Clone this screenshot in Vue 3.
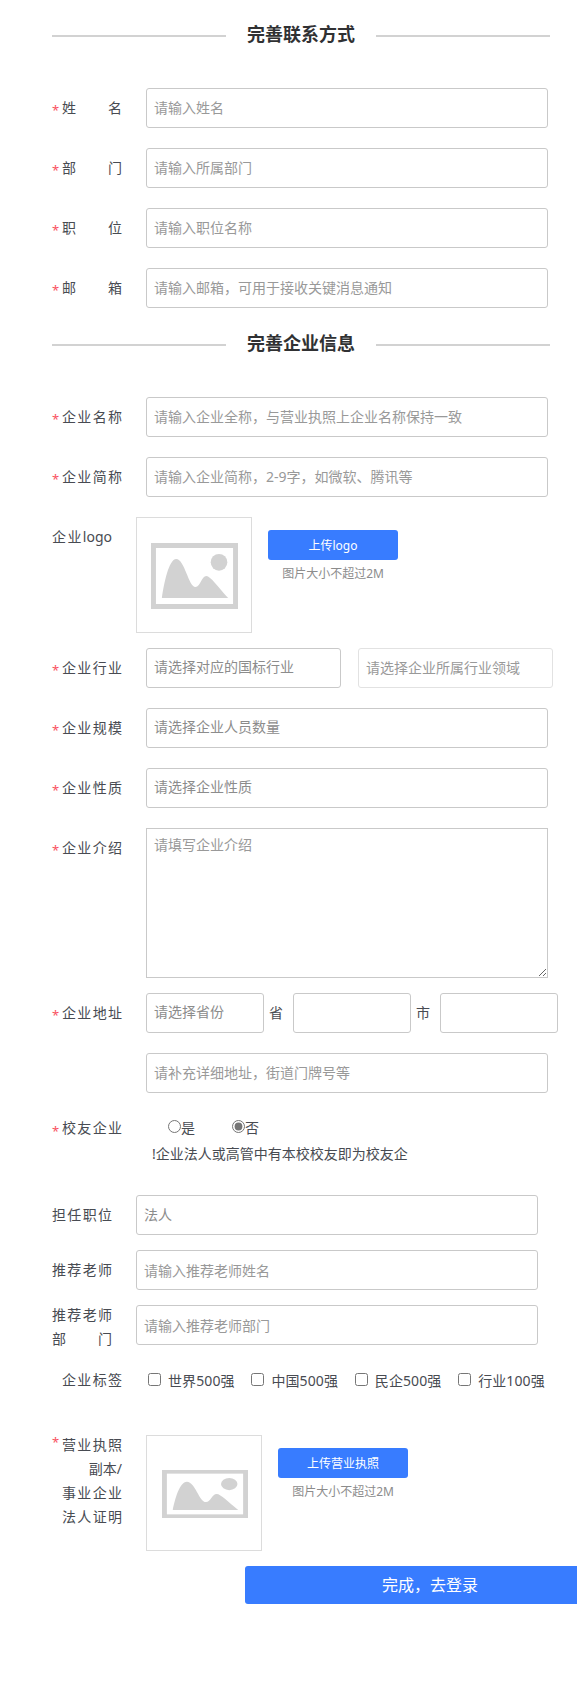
<script setup>
import { ref } from "vue";

const contact = ref([
  { label: "姓 名", placeholder: "请输入姓名", value: "" },
  { label: "部 门", placeholder: "请输入所属部门", value: "" },
  { label: "职 位", placeholder: "请输入职位名称", value: "" },
  { label: "邮 箱", placeholder: "请输入邮箱，可用于接收关键消息通知", value: "" },
]);
const company = ref([
  { label: "企业名称", placeholder: "请输入企业全称，与营业执照上企业名称保持一致", value: "" },
  { label: "企业简称", placeholder: "请输入企业简称，2-9字，如微软、腾讯等", value: "" },
]);
const selects = ref([
  { label: "企业规模", placeholder: "请选择企业人员数量", value: "" },
  { label: "企业性质", placeholder: "请选择企业性质", value: "" },
]);
const industry = ref("");
const field = ref("");
const intro = ref("");
const province = ref("");
const city = ref("");
const area = ref("");
const address = ref("");
const isAlumni = ref("no");
const duty = ref("");
const teacher = ref("");
const teacherDept = ref("");
const tags = ["世界500强", "中国500强", "民企500强", "行业100强"];
const checkedTags = ref([]);
</script>

<template>
  <div class="page">
    <div class="title"><i></i><h3>完善联系方式</h3><i></i></div>
    <div class="item" v-for="item in contact" :key="item.label">
      <span class="star">*</span>
      <label class="label">{{ item.label }}</label>
      <input class="input" type="text" v-model="item.value" :placeholder="item.placeholder" />
    </div>

    <div class="title second"><i></i><h3>完善企业信息</h3><i></i></div>
    <div class="item" v-for="item in company" :key="item.label">
      <span class="star">*</span>
      <label class="label">{{ item.label }}</label>
      <input class="input" type="text" v-model="item.value" :placeholder="item.placeholder" />
    </div>

    <div class="item logo">
      <label class="label">企业logo</label>
      <div class="preview">
        <svg class="pic" width="87" height="66" viewBox="0 0 88 66" preserveAspectRatio="none">
          <rect x="2.5" y="2.5" width="83" height="61" fill="#fff" stroke="#d2d2d2" stroke-width="5" />
          <circle cx="68.8" cy="19.3" r="8.4" fill="#d2d2d2" />
          <path d="M11 55C13 41 18 16 25.500 16C34 16 38 44 45 44C50 44 51 33 56 33C60 33 68 44 78 55Z" fill="#d2d2d2" />
        </svg>
      </div>
      <div class="upload">
        <button class="upload-btn">上传logo</button>
        <p>图片大小不超过2M</p>
      </div>
    </div>

    <div class="item">
      <span class="star">*</span>
      <label class="label">企业行业</label>
      <select class="input half" v-model="industry">
        <option value="">请选择对应的国标行业</option>
      </select>
      <input class="input half light" type="text" v-model="field" placeholder="请选择企业所属行业领域" />
    </div>
    <div class="item" v-for="item in selects" :key="item.label">
      <span class="star">*</span>
      <label class="label">{{ item.label }}</label>
      <select class="input" v-model="item.value">
        <option value="">{{ item.placeholder }}</option>
      </select>
    </div>
    <div class="item intro">
      <span class="star">*</span>
      <label class="label">企业介绍</label>
      <textarea class="input" v-model="intro" placeholder="请填写企业介绍"></textarea>
    </div>
    <div class="item">
      <span class="star">*</span>
      <label class="label">企业地址</label>
      <select class="input small" v-model="province">
        <option value="">请选择省份</option>
      </select>
      <span class="unit">省</span>
      <select class="input small" v-model="city"></select>
      <span class="unit">市</span>
      <select class="input small" v-model="area"></select>
    </div>
    <div class="item">
      <span class="star"></span>
      <label class="label"></label>
      <input class="input" type="text" v-model="address" placeholder="请补充详细地址，街道门牌号等" />
    </div>

    <div class="item alumni">
      <span class="star">*</span>
      <label class="label">校友企业</label>
      <div class="alumni-box">
        <div class="radios">
          <label><input type="radio" value="yes" v-model="isAlumni" />是</label>
          <label><input type="radio" value="no" v-model="isAlumni" />否</label>
        </div>
        <p>!企业法人或高管中有本校校友即为校友企</p>
      </div>
    </div>

    <div class="item tight">
      <label class="label">担任职位</label>
      <select class="input duty" v-model="duty">
        <option value="">法人</option>
      </select>
    </div>
    <div class="item tight">
      <label class="label">推荐老师</label>
      <input class="input" type="text" v-model="teacher" placeholder="请输入推荐老师姓名" />
    </div>
    <div class="item tight">
      <label class="label lines">推荐老师<br />部 门</label>
      <input class="input" type="text" v-model="teacherDept" placeholder="请输入推荐老师部门" />
    </div>

    <div class="item tags">
      <span class="star"></span>
      <label class="label">企业标签</label>
      <label class="tag" v-for="tag in tags" :key="tag">
        <input type="checkbox" :value="tag" v-model="checkedTags" />{{ tag }}
      </label>
    </div>

    <div class="item license">
      <span class="star">*</span>
      <label class="label lines">营业执照<br /><span class="right">副本/</span>事业企业<br />法人证明</label>
      <div class="preview">
        <svg class="pic" width="86" height="48" viewBox="0 0 88 66" preserveAspectRatio="none">
          <rect x="2.5" y="2.5" width="83" height="61" fill="#fff" stroke="#d2d2d2" stroke-width="5" />
          <circle cx="68.8" cy="19.3" r="8.4" fill="#d2d2d2" />
          <path d="M11 55C13 41 18 16 25.500 16C34 16 38 44 45 44C50 44 51 33 56 33C60 33 68 44 78 55Z" fill="#d2d2d2" />
        </svg>
      </div>
      <div class="upload">
        <button class="upload-btn">上传营业执照</button>
        <p>图片大小不超过2M</p>
      </div>
    </div>

    <button class="submit">完成，去登录</button>
  </div>
</template>

<style>
body {
  margin: 0;
  background: #fff;
}
</style>
<style scoped>
.page {
  box-sizing: border-box;
  width: 100%;
  height: 1684px;
  padding: 14px 0 0 52px;
  overflow: hidden;
  color: #484b52;
  font-size: 14px;
  font-family: "Noto Sans", "Noto Sans CJK SC", sans-serif;
}
.page * {
  box-sizing: border-box;
}
.title {
  display: flex;
  align-items: center;
  justify-content: space-between;
  width: 498px;
  height: 44px;
  margin-bottom: 30px;
}
.title.second {
  margin: -5px 0 30px;
}
.title i {
  width: 174px;
  height: 2px;
  background: #d2d2d2;
}
.title h3 {
  margin: 0 0 5px;
  color: #303133;
  font-size: 18px;
  font-weight: 700;
  line-height: 28px;
}
.item {
  display: flex;
  align-items: flex-start;
  width: 520px;
  margin-bottom: 20px;
}
.star {
  flex: none;
  width: 10px;
  height: 40px;
  color: #f9525f;
  font-size: 13px;
  line-height: 45px;
}
.label {
  flex: none;
  width: 60px;
  margin-right: 24px;
  line-height: 40px;
  text-align: justify;
  text-align-last: justify;
  text-justify: inter-character;
}
.label.lines {
  line-height: 24px;
}
.right {
  display: block;
  text-align: right;
  text-align-last: right;
}
.input {
  flex: none;
  width: 402px;
  height: 40px;
  margin: 0;
  padding: 0 7px 1px;
  border: 1px solid #c9c9c9;
  border-radius: 3px;
  outline: none;
  background: #fff;
  color: #484b52;
  font-family: inherit;
  font-size: 14px;
}
.input::placeholder {
  color: #999;
}
select.input {
  appearance: none;
  padding-bottom: 4px;
  color: #8c8c8c;
}
select.duty {
  padding-bottom: 1px;
}
.half {
  width: 195px;
}
.half.light {
  margin-left: 17px;
  border-color: #e2e2e2;
}
.small {
  width: 118px;
}
.unit {
  flex: none;
  width: 29px;
  padding-left: 5px;
  line-height: 40px;
}
.logo,
.intro {
  margin-bottom: 15px;
}
.intro .input {
  height: 150px;
  padding: 6px 7px;
  border-radius: 0;
  line-height: 20px;
}
.preview {
  display: flex;
  flex: none;
  align-items: center;
  justify-content: center;
  width: 116px;
  height: 116px;
  border: 1px solid #dcdcdc;
}
.logo .preview {
  padding: 2px 0 0 1px;
}
.license .preview {
  padding: 2px 0 0 1px;
}
.upload {
  width: 130px;
  margin: 13px 0 0 16px;
  text-align: center;
}
.upload-btn {
  display: block;
  width: 130px;
  height: 30px;
  padding: 1px 0 0;
  border: none;
  border-radius: 3px;
  background: #387cff;
  color: #fff;
  font-family: inherit;
  font-size: 12px;
  line-height: 29px;
}
.upload p {
  margin: 4px 0 0;
  color: #8c8c8c;
  font-size: 12px;
  line-height: 20px;
}
.alumni {
  height: 66px;
  margin-top: -4px;
}
.alumni .label {
  line-height: 38px;
}
.radios {
  display: flex;
  gap: 37px;
  padding: 9px 0 0 22px;
}
.radios label {
  display: flex;
  line-height: 20px;
}
.radios input {
  width: 13px;
  height: 13px;
  margin: 2px 0 0;
  accent-color: #757575;
}
.alumni-box p {
  margin: 6px 0 0 6px;
  line-height: 20px;
}
.tight {
  margin-bottom: 15px;
}
.tight .lines {
  height: 40px;
  margin-top: -2px;
}
.tight input.input {
  padding-bottom: 0;
}
.tags {
  height: 40px;
  margin-bottom: 35px;
}
.tags .label {
  margin-right: 26px;
}
.tag {
  display: flex;
  flex: none;
  align-items: center;
  width: 103.4px;
  height: 39px;
  letter-spacing: 0.1px;
}
.tag input {
  width: 13px;
  height: 13px;
  margin: 0 7px 0 0;
}
.license {
  margin-bottom: 15px;
}
.license .star {
  line-height: 15px;
}
.license .lines {
  margin-top: -2px;
}
.submit {
  display: block;
  width: 370px;
  height: 38px;
  margin-left: 193px;
  padding: 0;
  border: none;
  border-radius: 3px;
  background: #387cff;
  color: #fff;
  font-family: inherit;
  font-size: 16px;
  line-height: 38px;
}
</style>
